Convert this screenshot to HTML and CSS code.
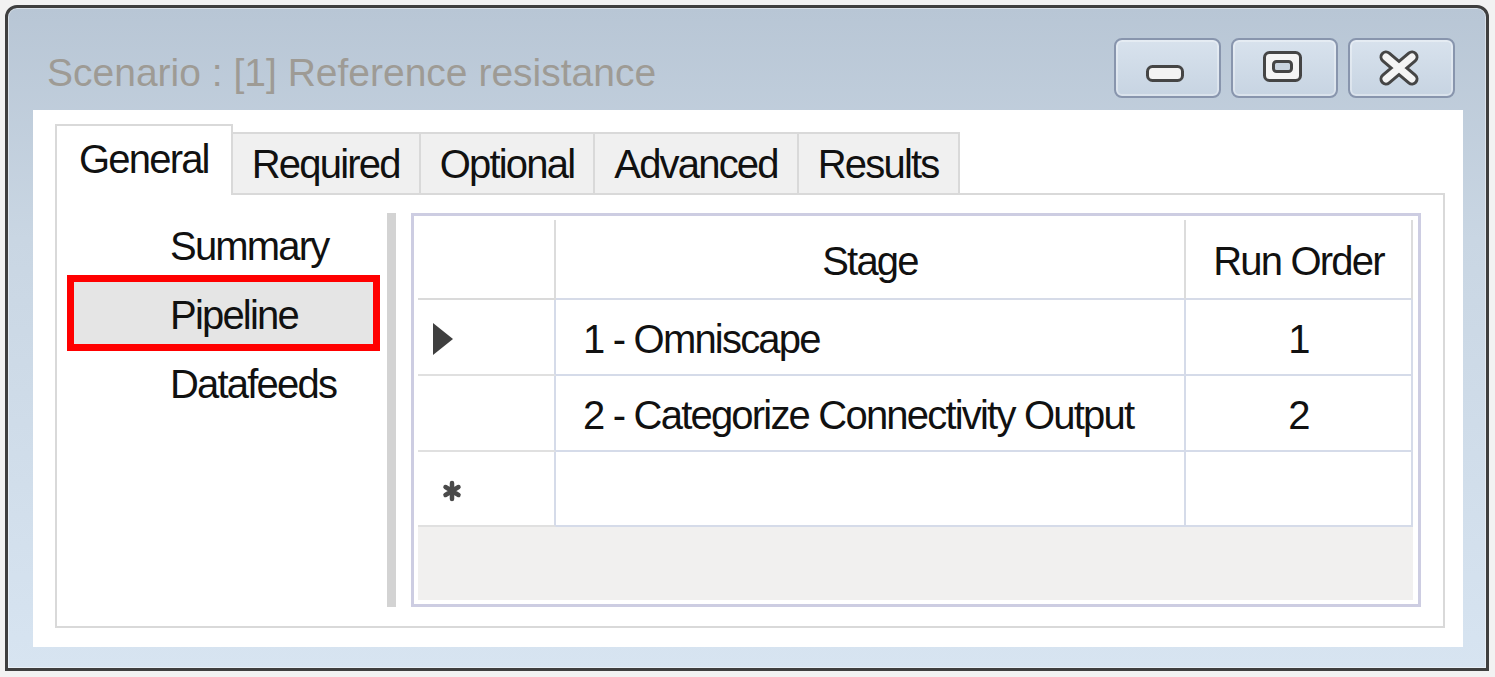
FILE: index.html
```html
<!DOCTYPE html>
<html lang="en">
<head>
<meta charset="utf-8">
<title>Scenario : [1] Reference resistance</title>
<link rel="stylesheet" href="styles.css">
</head>
<body>
<div class="window">
  <div class="titlebar">
    <div class="title">Scenario : [1] Reference resistance</div>
    <div class="caption-buttons">
      <div class="cap-btn">
        <svg width="103" height="56" viewBox="2 2 103 56">
          <rect x="33.5" y="28.5" width="35" height="14" rx="5" fill="#f2f2f2" stroke="#454545" stroke-width="3"/>
        </svg>
      </div>
      <div class="cap-btn">
        <svg width="103" height="56" viewBox="2 2 103 56">
          <rect x="33.5" y="14.5" width="36" height="28" rx="5" fill="#f4f4f4" stroke="#454545" stroke-width="3"/>
          <rect x="42.5" y="23.5" width="18" height="10" rx="3" fill="#c9d3de" stroke="#454545" stroke-width="3"/>
        </svg>
      </div>
      <div class="cap-btn">
        <svg width="103" height="56" viewBox="2 2 103 56">
          <path d="M38 19 L64 41 M64 19 L38 41" stroke="#454545" stroke-width="13" stroke-linecap="round"/>
          <path d="M38 19 L64 41 M64 19 L38 41" stroke="#f4f4f4" stroke-width="7" stroke-linecap="round"/>
        </svg>
      </div>
    </div>
  </div>
  <div class="client">
    <div class="tabs">
      <div class="tab selected">General</div>
      <div class="tab">Required</div>
      <div class="tab">Optional</div>
      <div class="tab">Advanced</div>
      <div class="tab">Results</div>
    </div>
    <div class="tab-page">
      <ul class="nav">
        <li class="nav-item">Summary</li>
        <li class="nav-item selected">Pipeline</li>
        <li class="nav-item">Datafeeds</li>
      </ul>
      <div class="splitter"></div>
      <div class="grid">
        <div class="grid-table">
          <div class="hcell rowhead-h"></div>
          <div class="hcell">Stage</div>
          <div class="hcell">Run Order</div>

          <div class="rh">
            <svg class="current" width="20" height="32" viewBox="0 0 20 32"><polygon points="0,0 20,16 0,32" fill="#3f3f3f"/></svg>
          </div>
          <div class="cell stage">1 - Omniscape</div>
          <div class="cell order">1</div>

          <div class="rh"></div>
          <div class="cell stage">2 - Categorize Connectivity Output</div>
          <div class="cell order">2</div>

          <div class="rh">
            <svg class="newrow" width="20" height="22" viewBox="0 0 20 22">
              <path d="M10 3 V19 M3.5 7 L16.5 15 M16.5 7 L3.5 15" stroke="#4a4a4a" stroke-width="4.5" stroke-linecap="round"/>
            </svg>
          </div>
          <div class="cell stage"></div>
          <div class="cell order"></div>
        </div>
        <div class="grid-empty"></div>
      </div>
    </div>
  </div>
</div>
</body>
</html>
```

FILE: styles.css
```css
* { box-sizing: border-box; }

html, body {
  margin: 0;
  padding: 0;
}

body {
  width: 1495px;
  height: 677px;
  overflow: hidden;
  background: #f2f2f2;
  font-family: "Liberation Sans", Arial, sans-serif;
  color: #111;
}

.window {
  margin: 5px 0 0 5px;
  width: 1484px;
  height: 666px;
  border: 3px solid #3f3f3f;
  border-radius: 12px 12px 0 0;
  background: linear-gradient(#b8c6d5, #c9d6e3 35%, #d7e4f1);
  box-shadow: inset 0 0 0 1px rgba(255, 255, 255, 0.45);
  display: flex;
  flex-direction: column;
}

.titlebar {
  flex: none;
  height: 102px;
  display: flex;
  justify-content: space-between;
  align-items: flex-start;
  padding: 0 31px 0 39px;
}

.title {
  padding-top: 42px;
  font-size: 39px;
  line-height: 46px;
  color: #9e9b95;
  white-space: nowrap;
}

.caption-buttons {
  display: flex;
  gap: 10px;
  margin-top: 30px;
}

.cap-btn {
  width: 107px;
  height: 60px;
  border: 2px solid #8895ad;
  border-radius: 8px;
  background: linear-gradient(#d8e2ed, #c7d4e2);
  box-shadow: inset 0 0 0 2px rgba(255, 255, 255, 0.35);
}

.cap-btn svg {
  display: block;
}

.client {
  margin: 0 23px 0 25px;
  height: 537px;
  background: #fff;
  padding: 14px 18px 19px 22px;
  display: flex;
  flex-direction: column;
}

.tabs {
  flex: none;
  height: 69px;
  display: flex;
  align-items: flex-end;
  position: relative;
  z-index: 1;
}

.tab {
  height: 61px;
  padding: 7px 19px 0;
  margin-left: -2px;
  font-size: 40px;
  letter-spacing: -1.8px;
  line-height: 46px;
  background: #f0f0f0;
  border: 2px solid #d9d9d9;
  border-bottom: none;
  white-space: nowrap;
}

.tab.selected {
  position: relative;
  z-index: 2;
  margin-left: 0;
  margin-bottom: -2px;
  height: 71px;
  padding: 10px 22px 0;
  background: #fff;
}

.tab-page {
  flex: 1;
  border: 2px solid #d9d9d9;
  background: #fff;
  display: flex;
  align-items: flex-start;
}

.nav {
  flex: none;
  list-style: none;
  margin: 18px 0 0 17px;
  padding: 0;
  width: 299px;
  display: flex;
  flex-direction: column;
  gap: 7px;
}

.nav-item {
  height: 62px;
  display: flex;
  align-items: center;
  padding: 5px 0 0 96px;
  font-size: 40px;
  letter-spacing: -1.8px;
}

.nav-item.selected {
  background: #e5e5e5;
  outline: 7px solid #ff0000;
}

.splitter {
  flex: none;
  margin: 18px 0 0 14px;
  width: 9px;
  height: 394px;
  background: #d3d3d3;
}

.grid {
  flex: none;
  margin: 18px 0 0 15px;
  width: 1010px;
  height: 394px;
  border: 3px solid #cdcde2;
  padding: 4px;
  background: #fff;
  display: flex;
  flex-direction: column;
}

.grid-table {
  width: 995px;
  display: grid;
  grid-template-columns: 138px 630px 227px;
  grid-template-rows: 80px 76px 76px 75px;
  font-size: 40px;
  letter-spacing: -1.8px;
}

.hcell {
  display: flex;
  align-items: center;
  justify-content: center;
  padding-top: 5px;
  border-right: 2px solid #dcdcdc;
  border-bottom: 2px solid #d6dbe8;
  white-space: nowrap;
}

.hcell.rowhead-h {
  border-bottom-color: #dadada;
}

.rh {
  display: flex;
  align-items: center;
  padding-top: 4px;
  border-right: 2px solid #d5dbe9;
  border-bottom: 2px solid #e0e0e0;
}

.rh .current {
  margin-left: 15px;
}

.rh .newrow {
  margin-left: 24px;
}

.cell {
  display: flex;
  align-items: center;
  padding-top: 5px;
  border-right: 2px solid #d5dbe9;
  border-bottom: 2px solid #d5dbe9;
  white-space: nowrap;
}

.cell.stage {
  padding-left: 27px;
}

.cell.order {
  justify-content: center;
}

.grid-empty {
  flex: 1;
  width: 995px;
  background: #f1f0ef;
}
```
